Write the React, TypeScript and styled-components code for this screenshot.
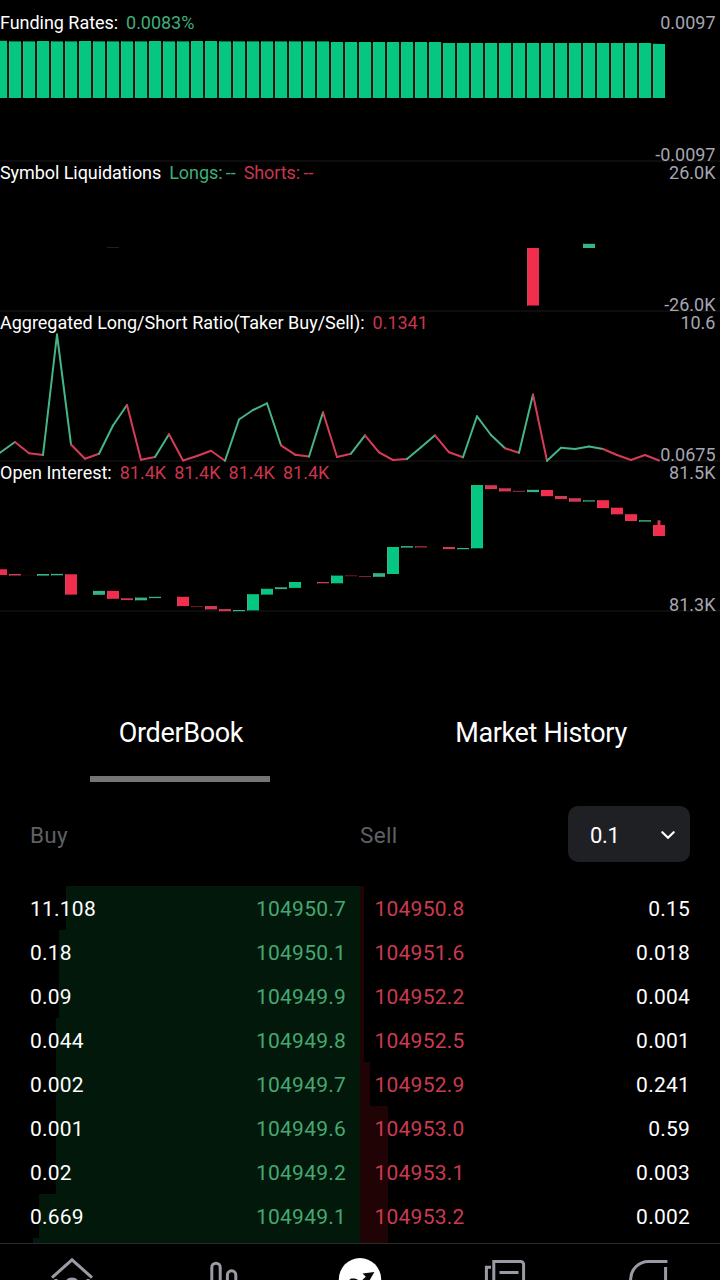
import React from "react";
import styled, { createGlobalStyle } from "styled-components";

const GREEN = "#06c781";
const RED = "#f22e4e";

const GlobalStyle = createGlobalStyle`
  * { box-sizing: border-box; }
  html, body { margin: 0; background: #000; }
  body { font-family: Roboto, "Liberation Sans", sans-serif; color: #fff; }
`;

const Screen = styled.div`
  width: 720px;
  height: 1280px;
  padding-top: 11px;
  display: flex;
  flex-direction: column;
  background: #000;
  overflow: hidden;
`;

/* ---------- indicator panels ---------- */

const Panel = styled.section`
  display: grid;
  grid-template: 150px / 720px;
  flex: none;
  font-size: 18px;
  line-height: 22px;

  > * { grid-area: 1 / 1; }
`;

const Plot = styled.svg`
  display: block;
  width: 720px;
  height: 150px;
  overflow: visible;
`;

const Legend = styled.div<{ $tracking?: number }>`
  display: flex;
  align-items: flex-start;
  gap: 8px;
  padding-top: 1px;
  white-space: pre;
  letter-spacing: ${(p) => p.$tracking ?? -0.04}px;
`;

const Value = styled.span<{ $tone: "up" | "down" }>`
  color: ${(p) => (p.$tone === "up" ? "#3fae7a" : "#c9364c")};
  word-spacing: -1px;
`;

const Scale = styled.div`
  display: flex;
  flex-direction: column;
  justify-content: space-between;
  align-items: flex-end;
  margin-bottom: -2px;
  padding: 4px 4.5px 0 0;
  line-height: 16px;
  color: #a6a6b2;
`;

const STEP = 14;
const barX = (i: number) => i * STEP - 5;

function Bar({ i, top, bottom, color, edge }: { i: number; top: number; bottom: number; color: string; edge: string }) {
  const h = bottom - top;
  return (
    <g>
      <rect x={barX(i)} y={top} width={12} height={h} fill={color} />
      <rect x={barX(i)} y={top} width={1} height={h} fill={edge} />
    </g>
  );
}

const Baseline = () => <rect x={0} y={149.5} width={720} height={1} fill="#1a1a1d" />;

const fundingTop = (i: number) => {
  if (i === 0) return 29.8;
  if (i < 24) return [3, 6, 11, 14, 15].includes(i) ? 30 : 30.4;
  if (i < 32) return 31;
  return i < 47 ? 32 : 33;
};

const ratio = [
  452, 442, 453.3, 455, 334.5, 444.5, 458.7, 453.7, 425.5, 405, 459.7, 457, 434.3, 460.5, 456, 450.8,
  460.7, 419.5, 410, 403.3, 445.3, 454.7, 456.5, 412.3, 457, 453.7, 435.3, 452.3, 460, 459, 447.3, 435.3,
  452.3, 457.3, 416.3, 435, 448.3, 452.7, 394.5, 460.7, 447.7, 449, 446.5, 449, 455, 460, 455, 460.5,
].map((y, i) => [1 + i * STEP, y - 311]);
const ratioTones = "grrggrrggrrgrrrrggggrrgrrgrrrggrrgggrgrggggrrrr";

type Candle = [number, number, number, "g" | "r", number?];
const candles: Candle[] = [
  [0, 569.3, 575, "r"], [1, 574, 575.5, "r"], [2, 574.6, 575.4, "r", 0.2], [3, 574, 575.6, "g"],
  [4, 573.9, 575.3, "g"], [5, 574.3, 594.6, "r"], [7, 590.9, 594.8, "g"], [8, 590.9, 598.8, "r"],
  [9, 598.3, 600.1, "r"], [10, 597.6, 600.3, "g"], [11, 596.8, 598.1, "g"], [13, 596.8, 606.1, "r"],
  [14, 606.1, 607.1, "r", 0.5], [15, 606, 609.4, "r"], [16, 609.1, 611.2, "r"], [17, 610, 611.2, "g"],
  [18, 594.2, 610.4, "g"], [19, 588.8, 594.6, "g"], [20, 587.3, 589.1, "g"], [21, 582, 587.9, "g"],
  [23, 582, 583.3, "r"], [24, 575.6, 583.3, "g"], [25, 575.3, 576.3, "r", 0.5], [26, 576, 577, "r", 0.6],
  [27, 573.2, 576.8, "g"], [28, 547, 574, "g"], [29, 546.1, 547.6, "g"], [30, 546.2, 547.5, "r", 0.8],
  [32, 547, 549.1, "r"], [33, 548, 549.2, "g"], [34, 485, 548.3, "g"], [35, 485.2, 489.1, "r"],
  [36, 488.3, 491.4, "r"], [37, 490.8, 491.9, "r", 0.7], [38, 489.8, 492.1, "g"], [39, 490, 496.2, "r"],
  [40, 496, 499.1, "r"], [41, 498.2, 501.7, "r"], [42, 500.3, 501.5, "g"], [43, 500.2, 508.1, "r"],
  [44, 507.7, 514.3, "r"], [45, 514.2, 521, "r"], [46, 520.2, 521.6, "g"], [47, 525, 536, "r"],
];

/* ---------- order book ---------- */

const Tabs = styled.div`
  display: grid;
  grid-template-columns: 1fr 1fr;
  flex: none;
  height: 92px;
  margin-top: 79px;
`;

const Tab = styled.div<{ $active?: boolean }>`
  display: flex;
  flex-direction: column;
  align-items: center;
  justify-content: space-between;
  padding: 28px 0 0 2px;
  font-size: 27px;
  line-height: 30px;
  letter-spacing: -0.35px;

  &::after {
    content: "";
    width: 180px;
    height: 6px;
    margin-left: -2px;
    background: ${(p) => (p.$active ? "#757575" : "transparent")};
  }
`;

const BookHeader = styled.div`
  display: grid;
  grid-template-columns: 330px 1fr 122px;
  align-items: center;
  flex: none;
  height: 56px;
  margin: 24px 30px 24px;
  font-size: 22.5px;
  color: #5f6065;
`;

const ColumnTitle = styled.span`
  padding-top: 2px;
  letter-spacing: 0.3px;
`;

const Precision = styled.button`
  display: flex;
  align-items: center;
  justify-content: space-between;
  height: 56px;
  padding: 2px 14px 0 22px;
  border: 0;
  border-radius: 10px;
  background: #1f2024;
  color: #fff;
  font-family: inherit;
  font-size: 22px;
  letter-spacing: -0.3px;
`;

const Book = styled.div`
  height: 357px;
  flex: none;
  overflow: hidden;
`;

const Row = styled.div`
  display: grid;
  grid-template-columns: 1fr 1fr;
  height: 44px;
  font-size: 21px;
  line-height: 46px;
  letter-spacing: 0.23px;
`;

const Side = styled.div<{ $side: "buy" | "sell"; $depth: number }>`
  display: flex;
  justify-content: space-between;
  padding: ${(p) => (p.$side === "buy" ? "0 14px 0 30px" : "0 30px 0 14.5px")};
  background: linear-gradient(${(p) => (p.$side === "buy" ? "#02180a, #02180a" : "#200405, #200405")})
    ${(p) => (p.$side === "buy" ? "right" : "left")} top / ${(p) => p.$depth}px 100% no-repeat;
`;

const Price = styled.span<{ $side: "buy" | "sell" }>`
  color: ${(p) => (p.$side === "buy" ? "#45a873" : "#cb3a50")};
`;

const orders: [string, string, number, string, string, number][] = [
  ["11.108", "104950.7", 294, "104950.8", "0.15", 4],
  ["0.18", "104950.1", 301, "104951.6", "0.018", 4],
  ["0.09", "104949.9", 301, "104952.2", "0.004", 4],
  ["0.044", "104949.8", 304, "104952.5", "0.001", 4],
  ["0.002", "104949.7", 304, "104952.9", "0.241", 10],
  ["0.001", "104949.6", 304, "104953.0", "0.59", 28],
  ["0.02", "104949.2", 304, "104953.1", "0.003", 28],
  ["0.669", "104949.1", 321, "104953.2", "0.002", 28],
  ["", "", 327, "", "", 28],
];

/* ---------- bottom navigation ---------- */

const Nav = styled.nav`
  display: grid;
  grid-template-columns: repeat(5, 144px);
  justify-items: center;
  flex: none;
  height: 37px;
  padding-top: 9px;
  border-top: 1px solid #2b2b2e;
  overflow: hidden;
`;

const NavIcon = styled.svg`
  width: 48px;
  height: 48px;
  fill: none;
  stroke: #9b9ba6;
  stroke-width: 3;
`;

export default function App() {
  return (
    <>
      <GlobalStyle />
      <Screen>
        <Panel>
          <Plot viewBox="0 0 720 150">
            <Baseline />
            <rect x={0} y={32} width={660} height={55} fill="#03210f" />
            {Array.from({ length: 48 }, (_, i) => (
              <Bar key={i} i={i} top={fundingTop(i)} bottom={87} color={GREEN} edge="#4fa982" />
            ))}
          </Plot>
          <Legend>
            <span>Funding Rates:</span>
            <Value $tone="up">0.0083%</Value>
          </Legend>
          <Scale>
            <span>0.0097</span>
            <span>-0.0097</span>
          </Scale>
        </Panel>

        <Panel>
          <Plot viewBox="0 0 720 150">
            <Baseline />
            <rect x={107} y={86} width={12} height={1} fill="#17251f" />
            <Bar i={38} top={87} bottom={144.5} color={RED} edge="#c04a5e" />
            <Bar i={42} top={82.8} bottom={87} color="#35b587" edge="#35b587" />
          </Plot>
          <Legend $tracking={-0.07}>
            <span>Symbol Liquidations</span>
            <Value $tone="up">Longs: --</Value>
            <Value $tone="down">Shorts: --</Value>
          </Legend>
          <Scale>
            <span>26.0K</span>
            <span>-26.0K</span>
          </Scale>
        </Panel>

        <Panel>
          <Plot viewBox="0 0 720 150">
            <Baseline />
            <line x1={-1} y1={142.4} x2={1} y2={141} stroke="#45b586" strokeWidth={2} />
            {ratio.slice(1).map(([x, y], i) => (
              <line
                key={i}
                x1={ratio[i][0]}
                y1={ratio[i][1]}
                x2={x}
                y2={y}
                stroke={ratioTones[i] === "g" ? "#45b586" : "#d63c57"}
                strokeWidth={2}
                strokeLinecap="round"
              />
            ))}
          </Plot>
          <Legend $tracking={-0.02}>
            <span>Aggregated Long/Short Ratio(Taker Buy/Sell):</span>
            <Value $tone="down">0.1341</Value>
          </Legend>
          <Scale>
            <span>10.6</span>
            <span>0.0675</span>
          </Scale>
        </Panel>

        <Panel>
          <Plot viewBox="0 0 720 150">
            <Baseline />
            {candles.map(([i, top, bottom, tone, opacity = 1]) => (
              <g key={i} opacity={opacity}>
                <Bar
                  i={i}
                  top={top - 461}
                  bottom={bottom - 461}
                  color={tone === "g" ? (bottom - top < 5 ? "#35b587" : GREEN) : bottom - top < 5 ? "#d23a54" : RED}
                  edge={tone === "g" ? "#45b08a" : "#c94a60"}
                />
              </g>
            ))}
            <rect x={657.5} y={59.3} width={3} height={5} fill="#d23a54" />
          </Plot>
          <Legend $tracking={0}>
            <span>Open Interest:</span>
            <Value $tone="down">81.4K</Value>
            <Value $tone="down">81.4K</Value>
            <Value $tone="down">81.4K</Value>
            <Value $tone="down">81.4K</Value>
          </Legend>
          <Scale>
            <span>81.5K</span>
            <span>81.3K</span>
          </Scale>
        </Panel>

        <Tabs>
          <Tab $active>OrderBook</Tab>
          <Tab>Market History</Tab>
        </Tabs>

        <BookHeader>
          <ColumnTitle>Buy</ColumnTitle>
          <ColumnTitle>Sell</ColumnTitle>
          <Precision>
            0.1
            <svg width="16" height="16" viewBox="0 0 16 16" fill="none" stroke="#fff" strokeWidth="2.2" strokeLinecap="round">
              <path d="M2.3 5.2 8 10.8l5.7-5.6" />
            </svg>
          </Precision>
        </BookHeader>

        <Book>
          {orders.map(([buyQty, bid, bidDepth, ask, sellQty, askDepth], i) => (
            <Row key={i}>
              <Side $side="buy" $depth={bidDepth}>
                <span>{buyQty}</span>
                <Price $side="buy">{bid}</Price>
              </Side>
              <Side $side="sell" $depth={askDepth}>
                <Price $side="sell">{ask}</Price>
                <span>{sellQty}</span>
              </Side>
            </Row>
          ))}
        </Book>

        <Nav>
          <NavIcon viewBox="0 0 48 48">
            <path d="M4 24.6 24 6.8l20 17.8M8 26v18h32V26" />
            <circle cx="24" cy="32.8" r="6.8" />
          </NavIcon>
          <NavIcon viewBox="0 0 48 48">
            <rect x="19.8" y="10.2" width="8.4" height="34" rx="4.2" />
            <rect x="35.4" y="17.8" width="8.4" height="26" rx="4.2" />
            <rect x="4.2" y="29" width="8.4" height="15" rx="4.2" />
          </NavIcon>
          <NavIcon viewBox="0 0 48 48">
            <circle cx="24" cy="26.3" r="21.2" fill="#fff" stroke="none" />
            <path
              d="M26.5 20.6 38.4 19 33.2 28l-3 4-6-3 5.6-5.2zM12 28l3-2.4 3.6-.2 3 1.2 1.4 3-6 4z"
              fill="#08080a"
              stroke="none"
            />
          </NavIcon>
          <NavIcon viewBox="0 0 48 48">
            <path d="M13.8 44V8.5h26.8a3 3 0 0 1 3 3V44M11 14.2H6.4V44M19.5 19.6h19" />
          </NavIcon>
          <NavIcon viewBox="0 0 48 48">
            <path d="M43.4 8.5H25A18 18 0 0 0 6.6 27v17M41.6 14v30" />
          </NavIcon>
        </Nav>
      </Screen>
    </>
  );
}
